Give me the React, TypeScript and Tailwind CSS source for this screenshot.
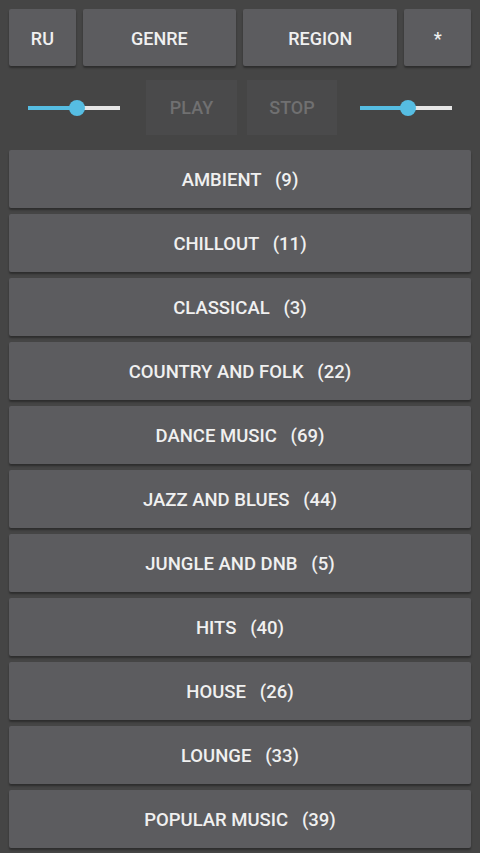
import React from 'react';

const genres: [string, number][] = [
  ['AMBIENT', 9],
  ['CHILLOUT', 11],
  ['CLASSICAL', 3],
  ['COUNTRY AND FOLK', 22],
  ['DANCE MUSIC', 69],
  ['JAZZ AND BLUES', 44],
  ['JUNGLE AND DNB', 5],
  ['HITS', 40],
  ['HOUSE', 26],
  ['LOUNGE', 33],
  ['POPULAR MUSIC', 39],
];

const TopButton = ({ label, className }: { label: string; className: string }) => (
  <div
    className={`h-[57px] flex items-center justify-center pt-[2px] rounded-[2px] bg-[#5c5c5f] text-[#f0f0f0] text-[18px] font-medium shadow-[0_2px_2px_rgba(0,0,0,0.35)] ${className}`}
  >
    {label}
  </div>
);

const Slider = ({ value }: { value: number }) => (
  <div className="relative w-[92px] h-[18px] flex items-center">
    <div className="h-[4px] w-full bg-[#e6e6e6]" />
    <div className="absolute left-0 h-[4px] bg-[#56bde2]" style={{ width: `${value}%` }} />
    <div
      className="absolute w-[16px] h-[16px] rounded-full bg-[#56bde2] -translate-x-1/2"
      style={{ left: `${value}%` }}
    />
  </div>
);

export default function App() {
  return (
    <div
      className="w-[480px] h-[853px] overflow-hidden bg-[#454545] px-[9px] pt-[9px]"
      style={{ fontFamily: 'Roboto, "Liberation Sans", sans-serif' }}
    >
      <div className="flex gap-[7px]">
        <TopButton label="RU" className="w-[67px]" />
        <TopButton label="GENRE" className="w-[154px]" />
        <TopButton label="REGION" className="w-[155px]" />
        <TopButton label="*" className="w-[67px]" />
      </div>

      <div className="flex items-center mt-[14px] h-[55px]">
        <div className="ml-[19px]">
          <Slider value={53} />
        </div>
        <div className="ml-[26px] w-[91px] h-[55px] flex items-center justify-center bg-[#4a4a4b] text-[#707071] text-[18px] font-medium">
          PLAY
        </div>
        <div className="ml-[10px] w-[90px] h-[55px] flex items-center justify-center bg-[#4a4a4b] text-[#707071] text-[18px] font-medium">
          STOP
        </div>
        <div className="ml-[23px]">
          <Slider value={52} />
        </div>
      </div>

      <div className="flex flex-col gap-[6px] mt-[15px]">
        {genres.map(([name, count]) => (
          <div
            key={name}
            className="h-[58px] shrink-0 flex items-center justify-center pt-[4px] rounded-[2px] bg-[#5c5c5f] text-[#f0f0f0] text-[18.5px] font-medium whitespace-pre shadow-[0_2px_2px_rgba(0,0,0,0.35)]"
          >
            {`${name}   (${count})`}
          </div>
        ))}
      </div>
    </div>
  );
}
